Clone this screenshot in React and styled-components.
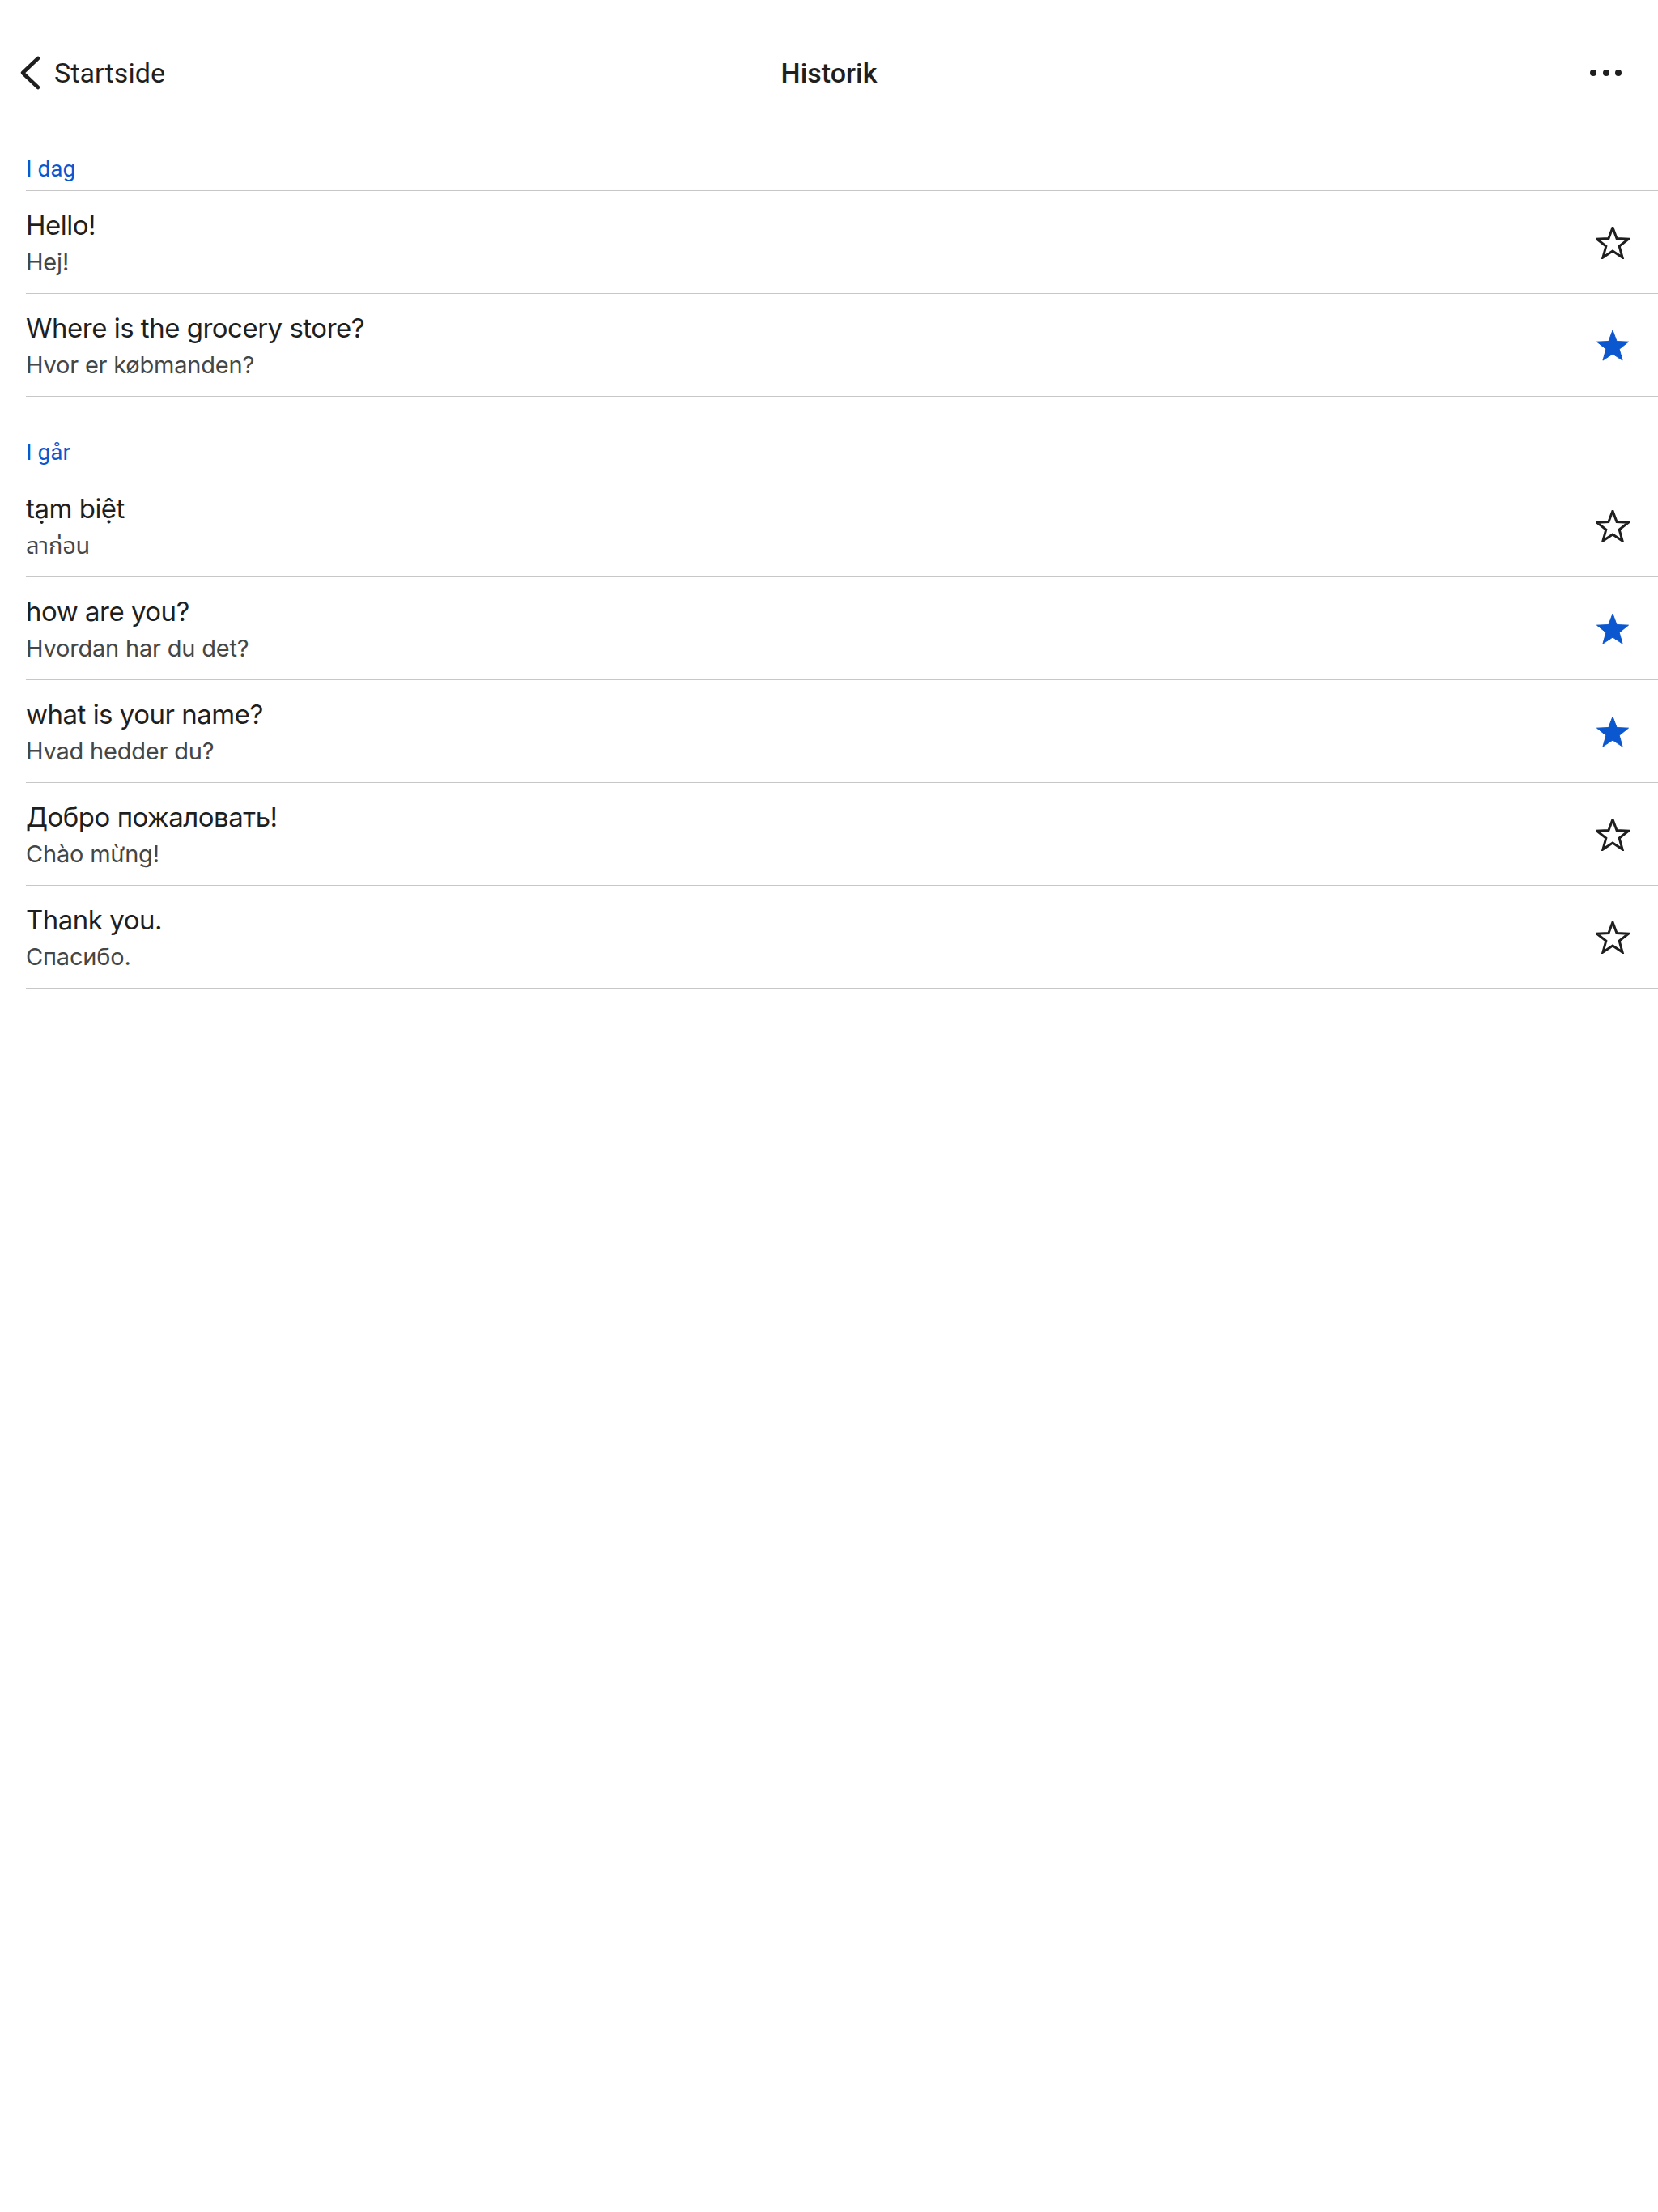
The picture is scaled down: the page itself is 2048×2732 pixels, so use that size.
import React from "react";
import styled, { createGlobalStyle } from "styled-components";

const GlobalStyle = createGlobalStyle`
  html, body {
    margin: 0;
    padding: 0;
    background: #ffffff;
  }
  body {
    font-family: Inter, "Noto Sans", "Noto Sans Thai", sans-serif;
    -webkit-font-smoothing: antialiased;
  }
`;

const history = [
  {
    label: "I dag",
    items: [
      { src: "Hello!", tr: "Hej!", starred: false },
      { src: "Where is the grocery store?", tr: "Hvor er købmanden?", starred: true },
    ],
  },
  {
    label: "I går",
    items: [
      { src: "tạm biệt", tr: "ลาก่อน", starred: false },
      { src: "how are you?", tr: "Hvordan har du det?", starred: true },
      { src: "what is your name?", tr: "Hvad hedder du?", starred: true },
      { src: "Добро пожаловать!", tr: "Chào mừng!", starred: false },
      { src: "Thank you.", tr: "Спасибо.", starred: false },
    ],
  },
];

// regular-ish five point star, 42x40 box
const starPoints = (() => {
  const cx = 21, cy = 21.5, R = 20.5, r = 8.6;
  const pts = [];
  for (let i = 0; i < 10; i++) {
    const rad = i % 2 === 0 ? R : r;
    const a = (-90 + i * 36) * (Math.PI / 180);
    pts.push(`${(cx + rad * Math.cos(a)).toFixed(2)},${(cy + rad * Math.sin(a)).toFixed(2)}`);
  }
  return pts.join(" ");
})();

const Star = ({ filled }) => (
  <svg width="42" height="40" viewBox="0 0 42 40">
    <polygon
      points={starPoints}
      fill={filled ? "#0b57d0" : "none"}
      stroke={filled ? "#0b57d0" : "#1f1f1f"}
      strokeWidth={filled ? 1 : 3}
      strokeLinejoin="miter"
    />
  </svg>
);

const App = () => {
  return (
    <Page>
      <GlobalStyle />
      <NavBar>
        <BackButton>
          <svg width="30" height="44" viewBox="0 0 30 44">
            <polyline
              points="25,4 6,22 25,40"
              fill="none"
              stroke="#1f1f1f"
              strokeWidth="4.6"
              strokeLinecap="round"
              strokeLinejoin="round"
            />
          </svg>
          <span>Startside</span>
        </BackButton>
        <Title>Historik</Title>
        <MoreButton>
          <Dot />
          <Dot />
          <Dot />
        </MoreButton>
      </NavBar>

      <List>
        {history.map((section) => (
          <Section key={section.label}>
            <SectionHeader>{section.label}</SectionHeader>
            {section.items.map((item) => (
              <Row key={item.src}>
                <Texts>
                  <Primary>{item.src}</Primary>
                  <Secondary>{item.tr}</Secondary>
                </Texts>
                <StarButton>
                  <Star filled={item.starred} />
                </StarButton>
              </Row>
            ))}
          </Section>
        ))}
      </List>
    </Page>
  );
};

export default App;

const Page = styled.div`
  width: 2048px;
  min-height: 2732px;
  background: #ffffff;
  color: #1f1f1f;
`;

const NavBar = styled.header`
  display: grid;
  grid-template-columns: 1fr auto 1fr;
  align-items: center;
  height: 100px;
  padding-top: 40px;
`;

const BackButton = styled.div`
  display: flex;
  align-items: center;
  gap: 15px;
  padding-left: 22px;
  font-family: Roboto, "Liberation Sans", sans-serif;
  font-size: 34px;
  color: #1f1f1f;
  letter-spacing: 0.1px;
`;

const Title = styled.h1`
  margin: 0;
  font-family: Roboto, "Liberation Sans", sans-serif;
  font-size: 34px;
  font-weight: 500;
  color: #1f1f1f;
`;

const MoreButton = styled.div`
  justify-self: end;
  display: flex;
  align-items: center;
  gap: 7.5px;
  padding-right: 45px;
`;

const Dot = styled.span`
  width: 8px;
  height: 8px;
  border-radius: 50%;
  background: #1f1f1f;
`;

const List = styled.main`
  margin-left: 32px;
`;

const Section = styled.section`
  display: flex;
  flex-direction: column;
`;

const SectionHeader = styled.h2`
  margin: 0;
  padding: 52px 0 9px;
  line-height: 34px;
  font-family: Roboto, "Liberation Sans", sans-serif;
  font-size: 28px;
  font-weight: 400;
  color: #0b57d0;
  border-bottom: 1px solid #c7c7c7;
`;

const Row = styled.div`
  display: flex;
  align-items: center;
  justify-content: space-between;
  padding: 20px 35px 18px 0;
  border-bottom: 1px solid #c7c7c7;
`;

const Texts = styled.div`
  display: flex;
  flex-direction: column;
`;

const Primary = styled.div`
  font-size: 33px;
  line-height: 44px;
  color: #1f1f1f;
  letter-spacing: -0.5px;
`;

const Secondary = styled.div`
  margin-top: 4px;
  font-size: 29px;
  line-height: 40px;
  color: #444746;
  letter-spacing: -0.2px;
`;

const StarButton = styled.div`
  display: flex;
  align-items: center;
  justify-content: center;
  width: 42px;
  height: 40px;
`;
